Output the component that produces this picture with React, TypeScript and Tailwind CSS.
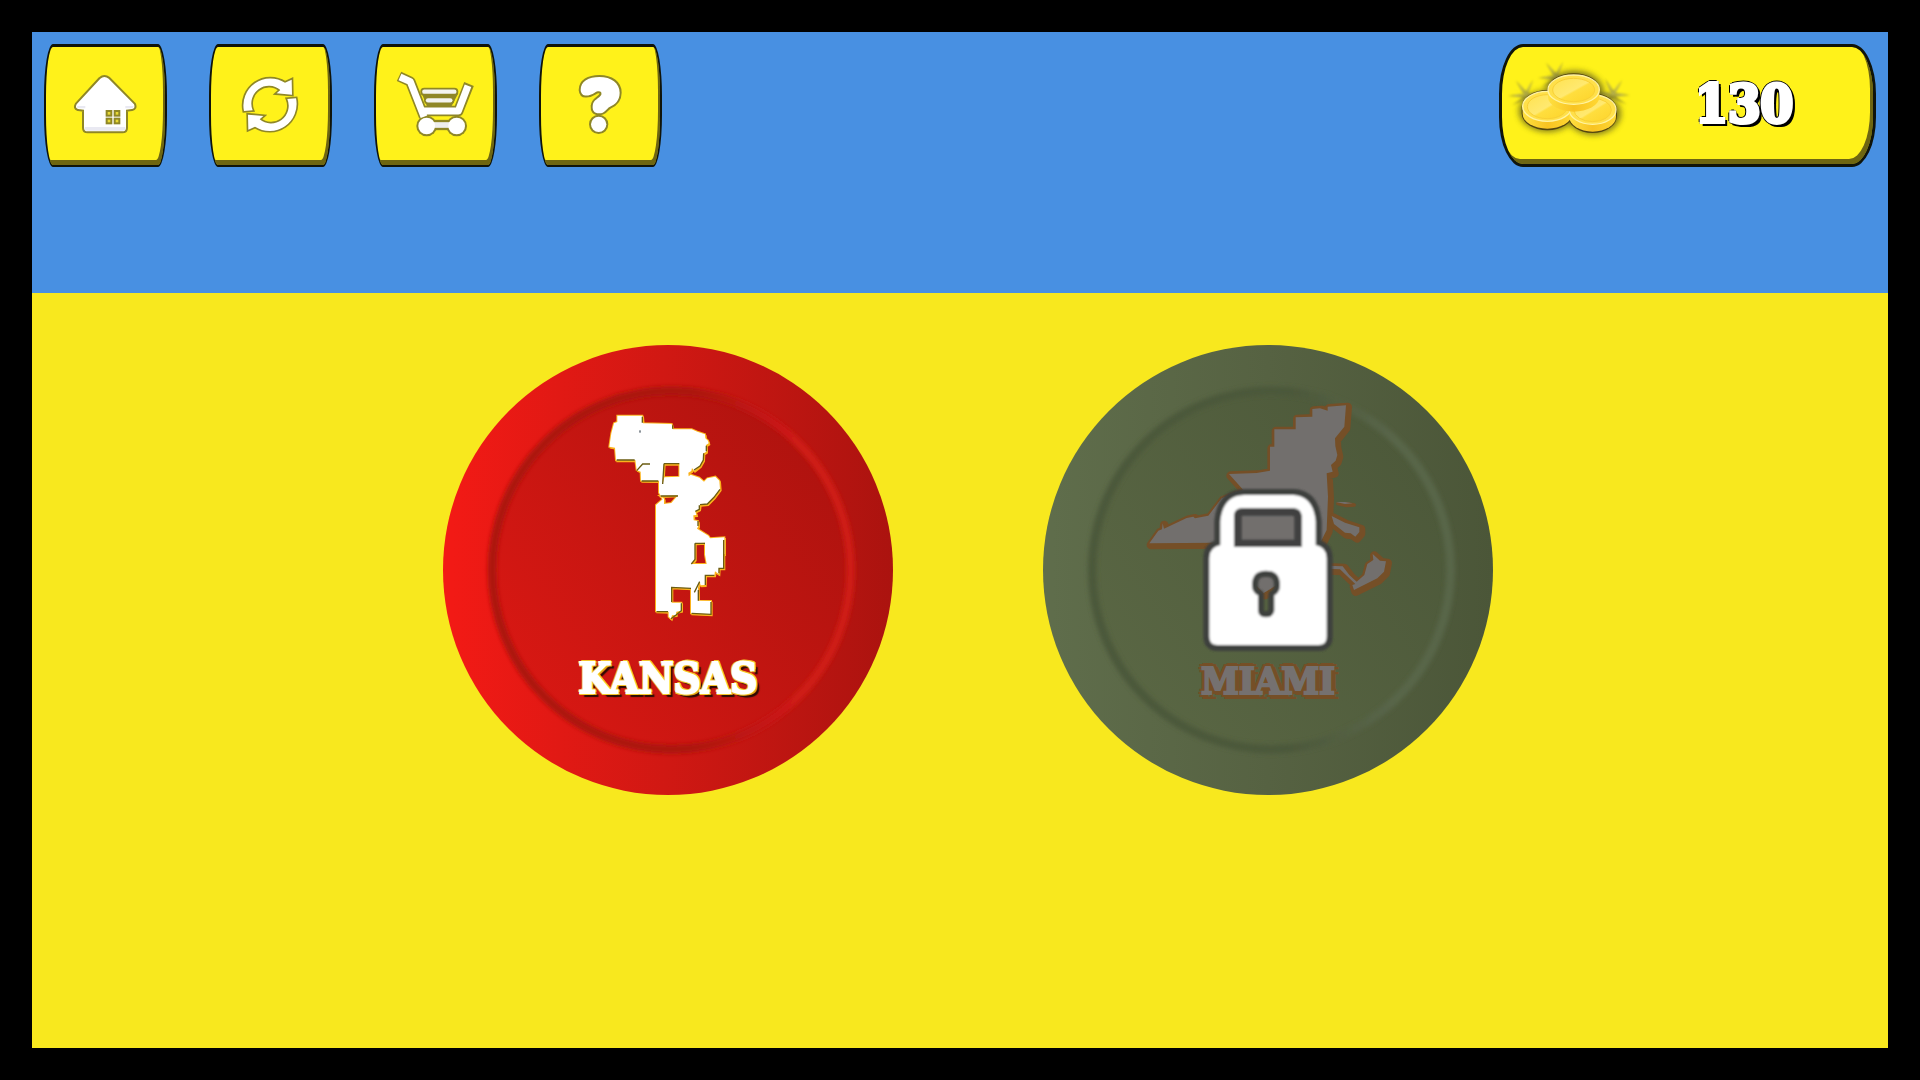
import type { ReactNode } from 'react';

const SLAB = "font-['DejaVu_Serif_Condensed','DejaVu_Serif',serif] font-bold";

const OLIVE = '#8f8726';

function SoftEdge({ id }: { id: string }) {
  return (
    <filter id={id} x="-20%" y="-20%" width="140%" height="140%">
      <feGaussianBlur stdDeviation="1.6" />
    </filter>
  );
}

function HomeIcon() {
  return (
    <svg viewBox="198 199 240 240" className="h-20 w-20" aria-hidden="true">
      <SoftEdge id="home-soft" />
      <g filter="url(#home-soft)">
        <path
          d="M301 237 Q313 227 326 237 L402 314 Q407 326 396 328 L378 330 V384 Q378 395 367 395 H263 Q252 395 252 384 V330 L234 328 Q224 325 230 314 Z"
          fill="#fff"
          stroke={OLIVE}
          strokeWidth="12"
          strokeLinejoin="round"
          paintOrder="stroke"
        />
        <path d="M254 382 H376 V386 Q376 393 367 393 H263 Q254 393 254 386 Z M232 319 H400 Q402 325 394 326 H236 Q229 325 232 319Z" fill="#e9e9f2" />
        <rect x="256" y="300" width="120" height="76" fill="#fff" />
        <g fill="#e8d935" stroke={OLIVE} strokeWidth="6">
          <rect x="320" y="334" width="14" height="14" />
          <rect x="344" y="334" width="14" height="14" />
          <rect x="320" y="357" width="14" height="14" />
          <rect x="344" y="357" width="14" height="14" />
        </g>
      </g>
    </svg>
  );
}

function RefreshIcon() {
  const arrow = 'M732 334 A81 81 0 0 1 855 249 L875 240 L876 285 L830 281 L841 271 A53 53 0 0 0 758 332 Z';
  return (
    <svg viewBox="693 199 240 240" className="h-20 w-20" aria-hidden="true">
      <SoftEdge id="refresh-soft" />
      <g fill="#fff" stroke={OLIVE} strokeWidth="10" paintOrder="stroke" filter="url(#refresh-soft)">
        <path d={arrow} />
        <path d={arrow} transform="rotate(180 810 315)" />
      </g>
    </svg>
  );
}

function CartIcon() {
  return (
    <svg viewBox="138 140 240 240" className="h-20 w-20 overflow-visible" fill="none" aria-hidden="true">
      <SoftEdge id="cart-soft" />
      <g filter="url(#cart-soft)">
        <path d="M215 222 H325 L303 264 H232 Z" fill={OLIVE} />
        <g stroke={OLIVE} strokeWidth="31" strokeLinejoin="round">
          <path d="M147 171 L181 187 L222 292" />
          <path d="M218 275 H325 L357 194" />
          <path d="M230 317 H320" />
        </g>
        <g stroke={OLIVE} strokeWidth="24" strokeLinecap="round">
          <path d="M223 217 H313" />
          <path d="M234 243 H301" />
        </g>
        <circle cx="230" cy="320" r="31" fill={OLIVE} />
        <circle cx="320" cy="320" r="31" fill={OLIVE} />
        <g stroke="#fff" strokeWidth="21" strokeLinejoin="round">
          <path d="M150 173 L181 187 L222 292" />
          <path d="M218 275 H325 L354 199" />
        </g>
        <path d="M230 317 H320" stroke="#eee" strokeWidth="17" />
        <g stroke="#f4f4ef" strokeWidth="13" strokeLinecap="round">
          <path d="M223 217 H313" />
          <path d="M234 243 H301" />
        </g>
        <circle cx="230" cy="320" r="25" fill="#fff" />
        <circle cx="320" cy="320" r="25" fill="#fff" />
      </g>
    </svg>
  );
}

function HelpIcon() {
  return (
    <svg viewBox="633 140 240 240" className="h-20 w-20" aria-hidden="true">
      <SoftEdge id="help-soft" />
      <g fill="#fff" stroke={OLIVE} strokeWidth="12" paintOrder="stroke" filter="url(#help-soft)">
        <path d="M692 212 C692 186 716 173 748 173 C784 173 809 191 809 220 C809 244 795 255 780 262 C768 268 766 282 747 282 C732 282 727 273 728 260 C729 240 748 238 754 226 C757 214 744 214 734 220 C718 230 694 236 692 212 Z" />
        <circle cx="746" cy="315" r="23" />
      </g>
    </svg>
  );
}

function Sparkle({ x, y, rotate }: { x: number; y: number; rotate: number }) {
  return (
    <g transform={`translate(${x} ${y}) rotate(${rotate})`} filter="url(#coin-soft)">
      <path
        d="M-5 0 L-27 -46 L1 -12 L25 -46 L7 -6 L50 -2 L8 6 L44 26 L0 12 L-44 26 L-8 6 L-54 -2 L-12 -5 L-36 -22 Z"
        fill="#7f7b34"
        opacity="0.7"
      />
      <path d="M0 0 L-16 -32 M0 0 L15 -32 M0 0 L-34 -1 M0 0 L32 -1" stroke="#c4bf62" strokeWidth="3" />
    </g>
  );
}

function Coin({ x, y, rx, ry }: { x: number; y: number; rx: number; ry: number }) {
  return (
    <g>
      <path
        d={`M${x - rx} ${y} v22 a${rx} ${ry} 0 0 0 ${rx * 2} 0 v-22 Z`}
        fill="url(#coin-edge)"
      />
      <ellipse cx={x} cy={y} rx={rx} ry={ry} fill="#ffe04a" stroke="#fff3a0" strokeWidth="4" />
      <ellipse cx={x} cy={y + 1} rx={rx - 14} ry={ry - 9} fill="url(#coin-face)" stroke="#f8cf34" strokeWidth="3" />
    </g>
  );
}

function CoinsIcon() {
  return (
    <svg viewBox="84 136 372 240" className="h-20 w-[124px] overflow-visible" aria-hidden="true">
      <defs>
        <linearGradient id="coin-edge" x1="0" y1="0" x2="1" y2="0">
          <stop offset="0" stopColor="#ffe040" />
          <stop offset="0.5" stopColor="#f8c322" />
          <stop offset="1" stopColor="#ffd832" />
        </linearGradient>
        <linearGradient id="coin-face" x1="0" y1="0" x2="1" y2="1">
          <stop offset="0" stopColor="#ffe250" />
          <stop offset="0.5" stopColor="#ffe970" />
          <stop offset="0.55" stopColor="#ffde3e" />
          <stop offset="1" stopColor="#fdd42a" />
        </linearGradient>
        <filter id="coin-soft" x="-30%" y="-30%" width="160%" height="160%">
          <feGaussianBlur stdDeviation="2.5" />
        </filter>
        <filter id="coin-shade" x="-30%" y="-30%" width="160%" height="160%">
          <feGaussianBlur stdDeviation="9" />
        </filter>
      </defs>
      <Sparkle x={228} y={170} rotate={-4} />
      <Sparkle x={138} y={224} rotate={-4} />
      <Sparkle x={399} y={222} rotate={4} />
      <g fill="#6c681c" opacity="0.9" filter="url(#coin-shade)">
        <ellipse cx="203" cy="271" rx="86" ry="62" />
        <ellipse cx="283" cy="215" rx="88" ry="64" />
        <ellipse cx="340" cy="279" rx="82" ry="63" />
      </g>
      <g fill="#55470f">
        <path d="M125 258 a77 50 0 0 1 154 0 v20 a77 51 0 0 1 -154 0Z" />
        <path d="M264 268 a73 50 0 0 1 147 0 v18 a73 51 0 0 1 -147 0Z" />
        <path d="M202 207 a79 49 0 0 1 158 0 v16 a79 50 0 0 1 -158 0Z" />
      </g>
      <Coin x={202} y={257} rx={74} ry={45} />
      <Coin x={338} y={267} rx={70} ry={44} />
      <Coin x={281} y={207} rx={77} ry={44} />
    </svg>
  );
}

function MenuButton({ label, children }: { label: string; children: ReactNode }) {
  return (
    <button
      type="button"
      aria-label={label}
      className="flex h-[123px] w-[123px] items-center justify-center rounded-[9px/52px] border-2 border-t-[3px] border-[#10140a] bg-[#fff21a] shadow-[inset_-2px_-5px_0_#6e6612]"
    >
      {children}
    </button>
  );
}

type DiscTheme = {
  id: string;
  rim: [string, string, string];
  face: [string, string];
  ring: [string, string];
};

const redDisc: DiscTheme = {
  id: 'red',
  rim: ['#f21a15', '#d01813', '#ab130f'],
  face: ['#da1813', '#b0130f'],
  ring: ['#ab120f', '#cf1a15'],
};

const greenDisc: DiscTheme = {
  id: 'green',
  rim: ['#5f6d4b', '#566242', '#4b5638'],
  face: ['#5a6744', '#4d593a'],
  ring: ['#4c583a', '#59664a'],
};

function Disc({ theme, children }: { theme: DiscTheme; children: ReactNode }) {
  return (
    <svg viewBox="39 45 1350 1350" className="absolute inset-0 h-full w-full" aria-hidden="true">
      <defs>
        <linearGradient id={`${theme.id}-rim`} x1="0" y1="0.5" x2="1" y2="0.5">
          <stop offset="0.02" stopColor={theme.rim[0]} />
          <stop offset="0.5" stopColor={theme.rim[1]} />
          <stop offset="1" stopColor={theme.rim[2]} />
        </linearGradient>
        <linearGradient id={`${theme.id}-face`} x1="0" y1="0.8" x2="0.9" y2="0.2">
          <stop offset="0" stopColor={theme.face[0]} />
          <stop offset="1" stopColor={theme.face[1]} />
        </linearGradient>
        <linearGradient id={`${theme.id}-ring`} x1="0" y1="0" x2="1" y2="0">
          <stop offset="0.55" stopColor={theme.ring[0]} />
          <stop offset="0.85" stopColor={theme.ring[1]} />
        </linearGradient>
        <filter id={`${theme.id}-soft`} x="-5%" y="-5%" width="110%" height="110%">
          <feGaussianBlur stdDeviation="6" />
        </filter>
        <filter id={`${theme.id}-lock`} x="-10%" y="-10%" width="120%" height="120%">
          <feGaussianBlur stdDeviation="3" />
        </filter>
      </defs>
      <circle cx="714" cy="720" r="675" fill={`url(#${theme.id}-rim)`} />
      <circle cx="726" cy="718" r="540" fill={`url(#${theme.id}-face)`} />
      <circle
        cx="724"
        cy="720"
        r="538"
        fill="none"
        stroke={`url(#${theme.id}-ring)`}
        strokeWidth="26"
        filter={`url(#${theme.id}-soft)`}
      />
      {children}
    </svg>
  );
}

const kansasShape =
  'M82 47 H157 L159 70 L245 72 L248 88 L305 88 L322 95 L345 103 L346 115 L354 122 L356 130 L348 135 L349 155 L341 160 L340 180 L330 198 L312 212 L306 204 L304 213 L295 218 L296 229 L302 224 L328 233 L342 245 L352 235 L376 230 L388 242 L390 268 L372 292 L352 312 L330 314 L328 328 L316 334 L319 345 L310 346 L311 361 L324 363 L325 378 L321 386 L355 407 L360 415 L403 412 L403 462 L401 462 L401 505 L387 505 L386 522 L375 514 L373 526 L346 526 L345 555 L332 556 L329 545 L324 562 L325 602 L363 603 L363 643 L303 640 L303 565 L245 562 L245 608 L274 608 L274 632 L259 635 L258 645 L246 646 L243 656 L236 650 L236 635 L198 634 L198 315 L218 298 L207 278 L207 243 L153 242 L152 215 L140 210 L136 180 L78 181 L75 143 L58 140 L64 100 L72 70 L82 66 Z ' +
  'M222 191 L218 252 L223 232 L268 230 L268 191 Z M210 288 L222 296 V312 L244 309 L264 286 Z M315 430 V478 L304 492 H350 L345 464 L345 428 Z';

function KansasMap() {
  return (
    <g transform="translate(480 210)" fillRule="evenodd">
      <path d={kansasShape} transform="translate(3 4)" fill="#fbb31c" stroke="#fbb31c" strokeWidth="4" />
      <path d={kansasShape} fill="#fff" stroke="#fbb31c" strokeWidth="6" paintOrder="stroke" />
      {/* dark crease along the lower right edges */}
      <path
        d="M157 50 V68 M248 76 V86 M349 137 V154 M341 160 L340 180 L330 198 L312 210 M390 268 L372 292 L352 312 L330 314 M328 316 V328 L316 334 M324 363 V378 M401 420 V505 L387 505 V520 M373 526 H346 V555 M325 570 V602 M363 606 V643 L305 640 M303 565 L245 562 V606 M274 610 V632 L258 645 L243 656 M234 635 H200 M205 243 H155 M134 180 H80 M222 191 L218 252 M222 191 H268 M212 288 H264 M315 430 H345 M315 430 V478 L304 492 M140 212 L158 192 H180 M329 545 L313 577"
        fill="none"
        stroke="#6b5c12"
        strokeWidth="4"
      />
      <rect x="148" y="91" width="4" height="7" fill="#55606a" />
    </g>
  );
}

const miamiShapes = [
  'M597 432 L680 429 L720 422 V350 H733 V298 H797 V262 L847 260 V237 L870 235 L893 242 V230 L948 226 L943 290 L915 325 L916 348 L922 375 L917 392 L903 405 L908 425 L890 430 L894 500 L890 600 L870 640 L740 765 L700 790 L560 638 L358 640 L385 602 L396 598 L398 580 L402 596 L470 564 L490 560 L495 565 L535 557 L575 505 L640 480 Z',
  'M905 558 L945 578 L988 592 V606 L976 620 L962 610 L945 608 L912 582 Z',
  'M918 516 L945 516 L968 520 L945 522 Z',
  'M890 707 L938 709 L958 735 L980 755 L1003 735 L1012 702 L1030 690 L1028 672 L1050 692 L1068 694 L1062 725 L1042 745 L972 780 L967 765 L976 762 L930 718 L890 716 Z',
];

function MiamiMap() {
  return (
    <g>
      {miamiShapes.map((d) => (
        <path
          key={d}
          d={d}
          transform="translate(5 5)"
          fill="#754f27"
          stroke="#754f27"
          strokeWidth={d === miamiShapes[2] ? 10 : 26}
          strokeLinejoin="round"
        />
      ))}
      {miamiShapes.map((d) => (
        <path key={d} d={d} fill="#726f6d" />
      ))}
    </g>
  );
}

function Lock() {
  return (
    <g filter="url(#green-lock)">
      <path
        d="M571 645 V574 Q578 497 642 495 H790 Q850 498 857 574 V645 Q890 652 890 684 V920 Q890 945 866 945 H562 Q538 945 538 920 V684 Q538 652 571 645 Z M612 650 V556 Q614 535 636 535 H792 Q812 537 815 556 V650 Z M666 765 Q666 722 708 722 Q750 722 750 765 Q750 788 733 796 V842 Q730 861 708 862 Q686 861 684 842 V796 Q666 788 666 765 Z"
        fill="#fff"
        fillRule="evenodd"
        stroke="#3d3f3d"
        strokeWidth="36"
        strokeLinejoin="round"
        paintOrder="stroke"
      />
      <path
        d="M624 640 V560 Q624 546 640 546 H788 Q803 547 804 560 V640 Z"
        fill="none"
        stroke="#3f4040"
        strokeWidth="22"
      />
    </g>
  );
}

export default function App() {
  return (
    <main className="flex min-h-screen flex-col border-[32px] border-black bg-[#f8e81e]">
      <header className="flex items-start justify-between bg-[#4890e2] px-3 pt-3 pb-[126px]">
        <nav className="flex gap-[42px]">
          <MenuButton label="Home">
            <HomeIcon />
          </MenuButton>
          <MenuButton label="Restart">
            <RefreshIcon />
          </MenuButton>
          <MenuButton label="Shop">
            <CartIcon />
          </MenuButton>
          <MenuButton label="Help">
            <HelpIcon />
          </MenuButton>
        </nav>

        <div className="flex h-[123px] w-[377px] items-center justify-between rounded-[24px/50px] border-[3px] border-[#10140a] bg-[#fff21a] pr-20 pl-[6px] shadow-[inset_-3px_-5px_0_#6e6612]">
          <CoinsIcon />
          <span
            className={`${SLAB} pb-1 text-[52px] leading-none text-white [-webkit-text-stroke:4px_#fff] [text-shadow:-2px_-2px_0_#000,2px_-2px_0_#000,-2px_2px_0_#000,0_-3px_0_#000,-3px_0_0_#000,4px_1px_0_#000,1px_4px_0_#000,4px_4px_0_#000]`}
          >
            130
          </span>
        </div>
      </header>

      <section className="flex flex-wrap justify-center gap-[150px] pt-[52px] pl-4">
        <button type="button" className="relative flex h-[450px] w-[450px] items-end justify-center rounded-full pb-[95px]">
          <Disc theme={redDisc}>
            <KansasMap />
          </Disc>
          <span
            className={`${SLAB} relative text-[42px] leading-none text-white [-webkit-text-stroke:2px_#fff] [text-shadow:-2px_-1px_0_#f5c52a,2px_-1px_0_#f5c52a,-1px_2px_0_#f5c52a,1px_-2px_0_#f5c52a,2px_2px_0_#d9a81c,4px_4px_1px_#2a0d04]`}
          >
            KANSAS
          </span>
        </button>

        <button type="button" className="relative flex h-[450px] w-[450px] items-end justify-center rounded-full pb-[95px]">
          <Disc theme={greenDisc}>
            <MiamiMap />
            <Lock />
          </Disc>
          <span
            className={`${SLAB} relative text-[38px] leading-none text-[#757170] [-webkit-text-stroke:2px_#757170] [text-shadow:-3px_-3px_0_#754f27,3px_-3px_0_#754f27,-3px_3px_0_#754f27,5px_5px_0_#754f27,0_-4px_0_#754f27,0_5px_0_#754f27,5px_0_0_#754f27,-4px_0_0_#754f27]`}
          >
            MIAMI
          </span>
        </button>
      </section>
    </main>
  );
}
